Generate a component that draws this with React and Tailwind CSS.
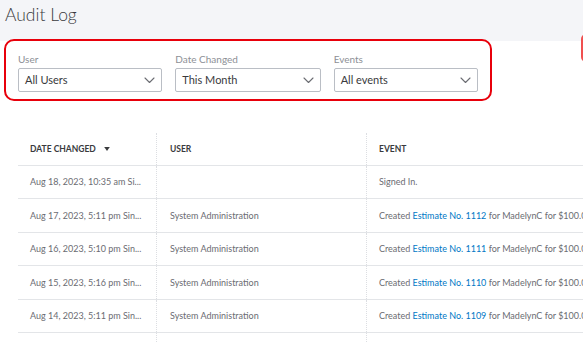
import React from "react";

const font = { fontFamily: "Lato, 'Open Sans', sans-serif" };

function Chevron() {
  return (
    <svg width="11" height="7" viewBox="0 0 11 7" fill="none">
      <path d="M1 1l4.5 4.5L10 1" stroke="#6b6c72" strokeWidth="1.1" strokeLinecap="round" strokeLinejoin="round" />
    </svg>
  );
}

function Select({ label, value, w }) {
  return (
    <div className={`flex flex-col ${w}`}>
      <div className="h-[14px] text-[10px] leading-[14px] text-[#8d9096]">{label}</div>
      <div className="mt-[2px] flex h-[24px] items-center justify-between rounded-[2px] border border-[#babec5] pl-[6px] pr-[6px]">
        <span className="text-[11px] text-[#393a3d]">{value}</span>
        <Chevron />
      </div>
    </div>
  );
}

const rows = [
  { d: "Aug 18, 2023, 10:35 am Si...", u: "", e: null, h: "h-[33px]" },
  { d: "Aug 17, 2023, 5:11 pm Sin...", u: "System Administration", e: "1112", h: "h-[34px]" },
  { d: "Aug 16, 2023, 5:10 pm Sin...", u: "System Administration", e: "1111", h: "h-[33px]" },
  { d: "Aug 15, 2023, 5:16 pm Sin...", u: "System Administration", e: "1110", h: "h-[34px]" },
  { d: "Aug 14, 2023, 5:11 pm Sin...", u: "System Administration", e: "1109", h: "h-[33px]" },
  { d: "", u: "", e: undefined, h: "h-[34px]" },
];

export default function App() {
  return (
    <div className="relative h-[343px] w-[583px] overflow-hidden bg-white" style={font}>
      <div className="h-[41px] bg-[#f4f5f8] pl-[5px] pt-[1px]">
        <div className="text-[17.5px] font-light leading-[28px] text-[#393a3d]">Audit Log</div>
      </div>
      <div className="absolute left-[581px] top-[34px] h-[28px] w-[20px] rounded-[5px] border-2 border-[#f05050]"></div>
      <div className="-mt-[2px] ml-[4px] flex h-[62px] w-[488px] gap-[13px] rounded-[10px] border-2 border-[#e8000b] px-[12px] pt-[11px]">
        <Select label="User" value="All Users" w="w-[145px]" />
        <Select label="Date Changed" value="This Month" w="w-[146px]" />
        <Select label="Events" value="All events" w="w-[145px]" />
      </div>
      <div className="ml-[18px] mt-[32px] w-[700px]">
        <div className="flex h-[33px] border-b border-[#e3e5e8] text-[8.5px] font-bold text-[#393a3d]">
          <div className="flex w-[138px] items-center gap-[8px] pl-[12px]">
            <span>DATE CHANGED</span>
            <svg width="6" height="4" viewBox="0 0 7 5"><path d="M0 0h7L3.5 5z" fill="#393a3d" /></svg>
          </div>
          <div className="flex w-[210px] items-center border-l border-dotted border-[#dcdee2] pl-[13px]">USER</div>
          <div className="flex flex-1 items-center border-l border-dotted border-[#dcdee2] pl-[12px]">EVENT</div>
        </div>
        {rows.map((r, i) => (
          <div key={i} className={`flex ${r.h} border-b border-[#e3e5e8] text-[9px] text-[#6b6c72]`}>
            <div className="flex w-[138px] items-center pl-[12px] whitespace-nowrap">{r.d}</div>
            <div className="flex w-[210px] items-center border-l border-dotted border-[#dcdee2] pl-[13px] whitespace-nowrap">{r.u}</div>
            <div className="flex flex-1 items-center border-l border-dotted border-[#dcdee2] pl-[12px] whitespace-nowrap">
              {r.e === null ? "Signed In." : r.e === undefined ? "" : (
                <span>
                  Created <span className="text-[#0077c5]">Estimate No. {r.e}</span> for MadelynC for $100.00
                </span>
              )}
            </div>
          </div>
        ))}
      </div>
    </div>
  );
}
